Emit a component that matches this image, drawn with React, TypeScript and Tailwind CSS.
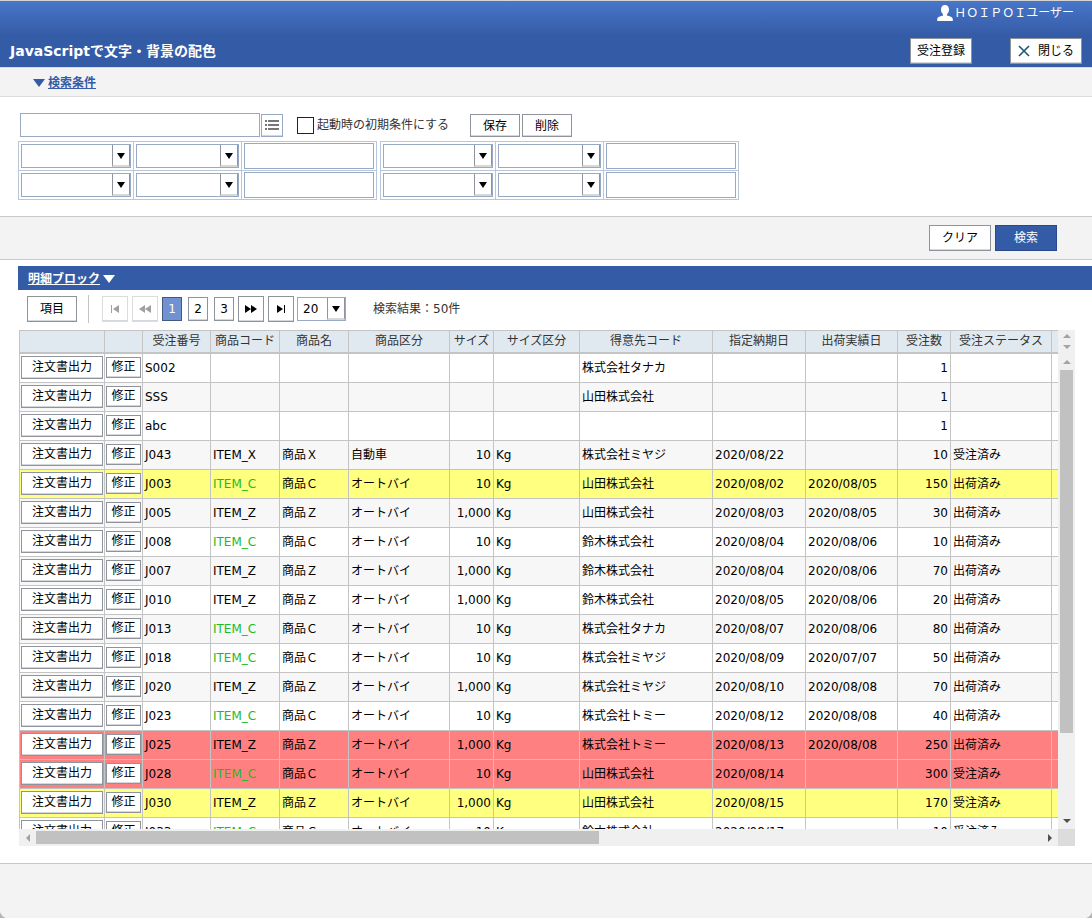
import type { ReactNode } from 'react'
import { clsx } from 'clsx'

type Order = {
  no: string;
  item?: string;
  name?: string;
  kind?: string;
  size?: string;
  unit?: string;
  customer?: string;
  due?: string;
  shipped?: string;
  qty: string;
  status?: string;
  mark?: 'yellow' | 'red';
};

const AUTO = 'オートバイ'

const orders: Order[] = [
  { no: 'S002', customer: '株式会社タナカ', qty: '1' },
  { no: 'SSS', customer: '山田株式会社', qty: '1' },
  { no: 'abc', qty: '1' },
  { no: 'J043', item: 'ITEM_X', name: '商品Ｘ', kind: '自動車', size: '10', unit: 'Kg', customer: '株式会社ミヤジ', due: '2020/08/22', qty: '10', status: '受注済み' },
  { no: 'J003', item: 'ITEM_C', name: '商品Ｃ', kind: AUTO, size: '10', unit: 'Kg', customer: '山田株式会社', due: '2020/08/02', shipped: '2020/08/05', qty: '150', status: '出荷済み', mark: 'yellow' },
  { no: 'J005', item: 'ITEM_Z', name: '商品Ｚ', kind: AUTO, size: '1,000', unit: 'Kg', customer: '山田株式会社', due: '2020/08/03', shipped: '2020/08/05', qty: '30', status: '出荷済み' },
  { no: 'J008', item: 'ITEM_C', name: '商品Ｃ', kind: AUTO, size: '10', unit: 'Kg', customer: '鈴木株式会社', due: '2020/08/04', shipped: '2020/08/06', qty: '10', status: '出荷済み' },
  { no: 'J007', item: 'ITEM_Z', name: '商品Ｚ', kind: AUTO, size: '1,000', unit: 'Kg', customer: '鈴木株式会社', due: '2020/08/04', shipped: '2020/08/06', qty: '70', status: '出荷済み' },
  { no: 'J010', item: 'ITEM_Z', name: '商品Ｚ', kind: AUTO, size: '1,000', unit: 'Kg', customer: '鈴木株式会社', due: '2020/08/05', shipped: '2020/08/06', qty: '20', status: '出荷済み' },
  { no: 'J013', item: 'ITEM_C', name: '商品Ｃ', kind: AUTO, size: '10', unit: 'Kg', customer: '株式会社タナカ', due: '2020/08/07', shipped: '2020/08/06', qty: '80', status: '出荷済み' },
  { no: 'J018', item: 'ITEM_C', name: '商品Ｃ', kind: AUTO, size: '10', unit: 'Kg', customer: '株式会社ミヤジ', due: '2020/08/09', shipped: '2020/07/07', qty: '50', status: '出荷済み' },
  { no: 'J020', item: 'ITEM_Z', name: '商品Ｚ', kind: AUTO, size: '1,000', unit: 'Kg', customer: '株式会社ミヤジ', due: '2020/08/10', shipped: '2020/08/08', qty: '70', status: '出荷済み' },
  { no: 'J023', item: 'ITEM_C', name: '商品Ｃ', kind: AUTO, size: '10', unit: 'Kg', customer: '株式会社トミー', due: '2020/08/12', shipped: '2020/08/08', qty: '40', status: '出荷済み' },
  { no: 'J025', item: 'ITEM_Z', name: '商品Ｚ', kind: AUTO, size: '1,000', unit: 'Kg', customer: '株式会社トミー', due: '2020/08/13', shipped: '2020/08/08', qty: '250', status: '出荷済み', mark: 'red' },
  { no: 'J028', item: 'ITEM_C', name: '商品Ｃ', kind: AUTO, size: '10', unit: 'Kg', customer: '山田株式会社', due: '2020/08/14', qty: '300', status: '受注済み', mark: 'red' },
  { no: 'J030', item: 'ITEM_Z', name: '商品Ｚ', kind: AUTO, size: '1,000', unit: 'Kg', customer: '山田株式会社', due: '2020/08/15', qty: '170', status: '受注済み', mark: 'yellow' },
  { no: 'J033', item: 'ITEM_C', name: '商品Ｃ', kind: AUTO, size: '10', unit: 'Kg', customer: '鈴木株式会社', due: '2020/08/17', qty: '10', status: '受注済み' },
]

const columns = [
  { title: '', width: 'w-[85px]' },
  { title: '', width: 'w-[38px]' },
  { title: '受注番号', width: 'w-[68px]' },
  { title: '商品コード', width: 'w-[69px]' },
  { title: '商品名', width: 'w-[69px]' },
  { title: '商品区分', width: 'w-[101px]' },
  { title: 'サイズ', width: 'w-[44px]' },
  { title: 'サイズ区分', width: 'w-[86px]' },
  { title: '得意先コード', width: 'w-[133px]' },
  { title: '指定納期日', width: 'w-[93px]' },
  { title: '出荷実績日', width: 'w-[92px]' },
  { title: '受注数', width: 'w-[53px]' },
  { title: '受注ステータス', width: 'w-[101px]' },
  { title: '', width: 'w-[100px]' },
]

const Button = (props: {
  className: string;
  disabled?: boolean;
  label?: string;
  children: ReactNode;
}) => {
  return (
    <button
      type="button"
      disabled={props.disabled}
      aria-label={props.label}
      className={clsx(
        'flex shrink-0 items-center justify-center border bg-white text-black shadow-[inset_0_-1px_0_#d4d7db]',
        props.disabled ? 'border-[#dcdcdc]' : 'border-[#8f949c]',
        props.className
      )}
    >
      {props.children}
    </button>
  );
};

const SelectBox = (props: {
  label: string;
  className: string;
  options?: string[];
}) => {
  return (
    <div className={clsx('relative h-6 shrink-0 border border-[#98a9c6] bg-white', props.className)}>
      <select aria-label={props.label} className="block h-full w-full appearance-none bg-transparent pl-[5px] outline-none">
        {(props.options || ['']).map((o) => <option key={o}>{o}</option>)}
      </select>
      <span className="
        pointer-events-none absolute inset-y-0 right-0 flex w-[18px] items-center justify-center pt-0.5
        border-r border-b-2 border-l border-r-[#8f949c] border-b-[#d8d8d8] border-l-[#8f949c]
      ">
        <svg width="8" height="6" viewBox="0 0 8 6"><path d="M0 0h8L4 6z" fill="#000" /></svg>
      </span>
    </div>
  );
};

const ConditionGroup = (props: {
  name: string;
}) => {
  const cell = 'flex h-[29px] items-center border-r border-b border-[#b9c7dc] px-0.5'
  return (
    <div className="border-t border-l border-[#b9c7dc]">
      {[1, 2].map((n) => (
        <div key={n} className="flex">
          <div className={cell}>
            <SelectBox label={`${props.name}${n} 項目`} className="w-[110px]" />
          </div>
          <div className={cell}>
            <SelectBox label={`${props.name}${n} 演算子`} className="w-[103px]" />
          </div>
          <div className={cell}>
            <input type="text" aria-label={`${props.name}${n} 値`} className="h-[26px] w-[130px] border border-[#98a9c6] px-1 outline-none" />
          </div>
        </div>
      ))}
    </div>
  );
};

const Arrow = (props: {
  dir: 'up' | 'down' | 'left' | 'right';
  color: string;
}) => {
  const d = {
    up: 'M0 6L4 2l4 4z',
    down: 'M0 2h8L4 6z',
    left: 'M6 0v8L2 4z',
    right: 'M2 0l4 4-4 4z',
  }[props.dir]
  return <svg width="8" height="8" viewBox="0 0 8 8" className="shrink-0"><path d={d} fill={props.color} /></svg>;
};

const Header = () => {
  return (
    <header className="border-t border-[#d4d4d4] bg-[#345ba6] bg-[linear-gradient(#4976c9,#345ba6_35px)] pb-[3px] text-white">
      <div className="flex h-6 items-center justify-end gap-px pr-[18px]">
        <svg width="16" height="16" viewBox="0 0 16 16" fill="#fff">
          <path d="M8 0C10.500 0 12 2 12 4.500c0 2-.7 3.600-2 4.600V10.500c2.300.7 5.400 1.400 5.800 3.300V16H.2v-2.200C.6 11.900 3.700 11.200 6 10.500V9.100C4.700 8.100 4 6.500 4 4.500 4 2 5.500 0 8 0z" />
        </svg>
        <span>ＨＯＩＰＯＩユーザー</span>
      </div>
      <div className="mt-[13px] flex items-center pr-2.5 pl-2.5">
        <h1 className="flex-1 text-sm leading-5 font-bold">JavaScriptで文字・背景の配色</h1>
        <Button className="h-[26px] w-[62px]">受注登録</Button>
        <Button className="ml-[38px] h-[26px] w-[72px] gap-2">
          <svg width="12" height="12" viewBox="0 0 12 12" stroke="#1d5675" strokeWidth="1.600"><path d="M1 1l10 10M11 1L1 11" /></svg>
          閉じる
        </Button>
      </div>
    </header>
  );
};

const SearchForm = () => {
  return (
    <section className="px-[18px] pt-4 pb-4">
      <div className="mb-1 flex items-center pl-0.5">
        <input type="text" aria-label="条件名" className="h-6 w-60 border border-[#98a9c6] px-1 outline-none" />
        <button type="button" aria-label="一覧" className="mt-px ml-px flex h-[23px] w-[22px] items-center justify-center border border-[#98a9c6] bg-white shadow-[inset_0_-1px_0_#d4d7db]">
          <svg width="14" height="11" viewBox="0 0 14 11" fill="#777">
            <path d="M0 0h2v2H0zM3 0h11v2H3zM0 4h2v2H0zM3 4h11v2H3zM0 8h2v2H0zM3 8h11v2H3z" />
          </svg>
        </button>
        <label className="ml-3.5 flex items-center gap-[3px] text-[#333]">
          <input type="checkbox" className="h-[17px] w-[17px] appearance-none border border-[#222] bg-white" />
          起動時の初期条件にする
        </label>
        <Button className="mt-px ml-[21px] h-[23px] w-[50px]">保存</Button>
        <Button className="mt-px ml-0.5 h-[23px] w-[50px]">削除</Button>
      </div>
      <div className="flex gap-[3px]">
        <ConditionGroup name="左条件" />
        <ConditionGroup name="右条件" />
      </div>
    </section>
  );
};

const Pager = () => {
  return (
    <div className="flex h-10 items-center pb-0.5 pl-[9px]">
      <Button className="h-[26px] w-[50px]">項目</Button>
      <div className="ml-[11px] h-7 w-px bg-[#c4c4c4]" />
      <Button className="ml-[13px] h-[26px] w-[26px]" disabled label="最初のページ">
        <svg width="8" height="8" viewBox="0 0 8 8" fill="#a0a0a0"><path d="M0 0h1v8H0zM8 0v8L2 4z" /></svg>
      </Button>
      <Button className="ml-1 h-[26px] w-[26px]" disabled label="前のページ">
        <svg width="12" height="8" viewBox="0 0 12 8" fill="#a0a0a0"><path d="M6 0v8L0 4zM12 0v8L6 4z" /></svg>
      </Button>
      <button type="button" aria-current="page" className="ml-1 h-6 w-5 border border-[#46597c] bg-[#7092d2] text-white">1</button>
      <Button className="ml-1.5 h-6 w-5">2</Button>
      <Button className="ml-1.5 h-6 w-5">3</Button>
      <Button className="ml-1 h-[26px] w-[26px]" label="次のページ">
        <svg width="12" height="8" viewBox="0 0 12 8" fill="#000"><path d="M0 0l6 4-6 4zM6 0l6 4-6 4z" /></svg>
      </Button>
      <Button className="ml-1 h-[26px] w-[26px]" label="最後のページ">
        <svg width="8" height="8" viewBox="0 0 8 8" fill="#000"><path d="M0 0l6 4-6 4zM7 0h1v8H7z" /></svg>
      </Button>
      <SelectBox label="表示件数" className="ml-[3px] w-[49px]" options={['20', '50', '100']} />
      <p className="ml-[27px] text-[#333]">検索結果：50件</p>
    </div>
  );
};

const OrderRow = (props: {
  order: Order;
}) => {
  const o = props.order
  const cell = 'h-[29px] border-r border-b border-[#c4c4c4] px-0.5'
  const buttonCell = 'border-r border-b border-[#c4c4c4] px-px pb-0.5'
  return (
    <tr className={clsx(
      o.mark === 'yellow' && 'bg-[#ffff80]',
      o.mark === 'red' && 'bg-[#ff8080]',
      !o.mark && 'even:bg-[#f7f7f7]'
    )}>
      <td className={buttonCell}><Button className="h-[23px] w-[82px]">注文書出力</Button></td>
      <td className={buttonCell}><Button className="h-[21px] w-[35px]">修正</Button></td>
      <td className={cell}>{o.no}</td>
      <td className={clsx(cell, o.item === 'ITEM_C' && 'text-[#22bb22]')}>{o.item}</td>
      <td className={cell}>{o.name}</td>
      <td className={cell}>{o.kind}</td>
      <td className={clsx(cell, 'text-right')}>{o.size}</td>
      <td className={cell}>{o.unit}</td>
      <td className={cell}>{o.customer}</td>
      <td className={cell}>{o.due}</td>
      <td className={cell}>{o.shipped}</td>
      <td className={clsx(cell, 'text-right')}>{o.qty}</td>
      <td className={cell}>{o.status}</td>
      <td className={cell}></td>
    </tr>
  );
};

const OrderTable = () => {
  return (
    <div className="mr-[17px] ml-px">
      <div className="flex h-[499px]">
        <div className="min-w-0 flex-1 overflow-hidden">
          <table className="w-[1133px] table-fixed border-separate border-spacing-0 border-t border-l border-[#c4c4c4] whitespace-nowrap">
            <thead>
              <tr className="bg-[#e1e9f0]">
                {columns.map((c, i) => (
                  <th key={i} className={clsx('h-[23px] border-r border-b-2 border-[#c4c4c4] p-0 pb-0.5 text-center font-normal text-[#333]', c.width)}>
                    {c.title}
                  </th>
                ))}
              </tr>
            </thead>
            <tbody>
              {orders.map((o) => <OrderRow key={o.no} order={o} />)}
            </tbody>
          </table>
        </div>
        <div className="flex w-[17px] flex-col items-center bg-[#f0f0f0]">
          <div className="flex h-[23px] flex-col items-center justify-between py-0.5">
            <Arrow dir="up" color="#a3a3a3" />
            <Arrow dir="down" color="#a3a3a3" />
          </div>
          <div className="flex h-[17px] items-center"><Arrow dir="up" color="#a3a3a3" /></div>
          <div className="h-[363px] w-[13px] bg-[#c1c1c1]" />
          <div className="mt-auto flex h-[17px] items-center"><Arrow dir="down" color="#505050" /></div>
        </div>
      </div>
      <div className="flex h-[17px]">
        <div className="flex flex-1 items-center bg-[#f0f0f0]">
          <div className="flex w-[17px] justify-center"><Arrow dir="left" color="#a3a3a3" /></div>
          <div className="flex-1"><div className="h-[13px] w-[56%] bg-[#c1c1c1]" /></div>
          <div className="flex w-[17px] justify-center"><Arrow dir="right" color="#505050" /></div>
        </div>
        <div className="w-[17px] bg-[#dcdcdc]" />
      </div>
    </div>
  );
};

export default function App() {
  return (
    <div className="bg-[#b5b5b5]">
      <main className="
        flex min-h-screen flex-col overflow-hidden rounded-b-lg bg-white
        font-['DejaVu_Sans','Noto_Sans_CJK_JP',sans-serif] text-xs text-black
      ">
        <Header />
        <div className="flex h-[30px] items-center gap-[3px] border-y border-[#dcdcdc] bg-[#f3f3f3] pt-0.5 pl-[33px] text-[#345ba6]">
          <svg width="12" height="8" viewBox="0 0 12 8"><path d="M0 0h12L6 8z" fill="#345ba6" /></svg>
          <a href="#search" className="font-bold underline">検索条件</a>
        </div>
        <SearchForm />
        <div className="flex h-11 items-center justify-end gap-1 border-y border-[#c8c8c8] bg-[#f3f3f3] pr-[35px]">
          <Button className="h-[26px] w-[62px]">クリア</Button>
          <button type="button" className="h-[26px] w-[62px] border border-[#29498a] bg-[#345ba6] text-white">検索</button>
        </div>
        <section className="mt-1.5 ml-[18px]">
          <div className="flex h-6 items-center gap-[3px] bg-[#345ba6] pt-0.5 pl-2.5 text-white">
            <a href="#detail" className="font-bold underline">明細ブロック</a>
            <svg width="12" height="8" viewBox="0 0 12 8"><path d="M0 0h12L6 8z" fill="#fff" /></svg>
          </div>
          <Pager />
          <OrderTable />
        </section>
        <footer className="mt-[17px] min-h-[55px] flex-1 border-t border-[#c8c8c8] bg-[#f3f3f3]" />
      </main>
    </div>
  )
}
